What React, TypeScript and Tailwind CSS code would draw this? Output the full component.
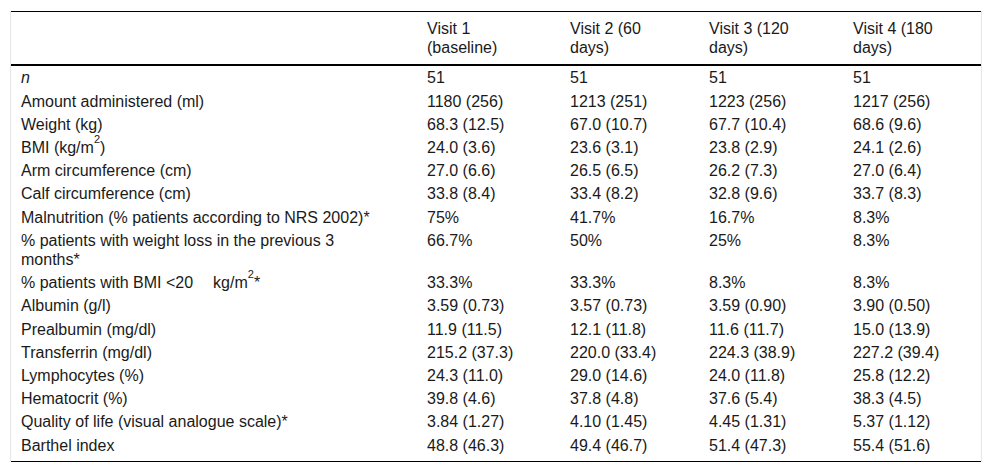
import React from "react";

type Row = { label: React.ReactNode; values: string[] };

const rows: Row[] = [
  { label: <i>n</i>, values: ["51", "51", "51", "51"] },
  { label: "Amount administered (ml)", values: ["1180 (256)", "1213 (251)", "1223 (256)", "1217 (256)"] },
  { label: "Weight (kg)", values: ["68.3 (12.5)", "67.0 (10.7)", "67.7 (10.4)", "68.6 (9.6)"] },
  {
    label: (
      <>
        BMI (kg/m<sup className="text-[11px] align-[5px] leading-none">2</sup>)
      </>
    ),
    values: ["24.0 (3.6)", "23.6 (3.1)", "23.8 (2.9)", "24.1 (2.6)"],
  },
  { label: "Arm circumference (cm)", values: ["27.0 (6.6)", "26.5 (6.5)", "26.2 (7.3)", "27.0 (6.4)"] },
  { label: "Calf circumference (cm)", values: ["33.8 (8.4)", "33.4 (8.2)", "32.8 (9.6)", "33.7 (8.3)"] },
  { label: "Malnutrition (% patients according to NRS 2002)*", values: ["75%", "41.7%", "16.7%", "8.3%"] },
  { label: "% patients with weight loss in the previous 3 months*", values: ["66.7%", "50%", "25%", "8.3%"] },
  {
    label: (
      <>
        % patients with BMI &lt;20<span className="inline-block w-[20px]" />kg/m
        <sup className="text-[11px] align-[5px] leading-none">2</sup>*
      </>
    ),
    values: ["33.3%", "33.3%", "8.3%", "8.3%"],
  },
  { label: "Albumin (g/l)", values: ["3.59 (0.73)", "3.57 (0.73)", "3.59 (0.90)", "3.90 (0.50)"] },
  { label: "Prealbumin (mg/dl)", values: ["11.9 (11.5)", "12.1 (11.8)", "11.6 (11.7)", "15.0 (13.9)"] },
  { label: "Transferrin (mg/dl)", values: ["215.2 (37.3)", "220.0 (33.4)", "224.3 (38.9)", "227.2 (39.4)"] },
  { label: "Lymphocytes (%)", values: ["24.3 (11.0)", "29.0 (14.6)", "24.0 (11.8)", "25.8 (12.2)"] },
  { label: "Hematocrit (%)", values: ["39.8 (4.6)", "37.8 (4.8)", "37.6 (5.4)", "38.3 (4.5)"] },
  { label: "Quality of life (visual analogue scale)*", values: ["3.84 (1.27)", "4.10 (1.45)", "4.45 (1.31)", "5.37 (1.12)"] },
  { label: "Barthel index", values: ["48.8 (46.3)", "49.4 (46.7)", "51.4 (47.3)", "55.4 (51.6)"] },
];

const visits = ["Visit 1 (baseline)", "Visit 2 (60 days)", "Visit 3 (120 days)", "Visit 4 (180 days)"];

export default function App() {
  return (
    <div className="w-[992px] h-[472px] bg-white px-[10px] pt-[11px] font-['Liberation_Sans',Arial,sans-serif] text-[16px] text-[#1a1a1a]">
      <div className="border-x border-[#e6e6e6]">
        <table className="w-full border-collapse table-fixed leading-[19.2px]">
          <colgroup>
            <col className="w-[406px]" />
            <col className="w-[143px]" />
            <col className="w-[139px]" />
            <col className="w-[144px]" />
            <col />
          </colgroup>
          <thead>
            {/* header row */}
            <tr className="border-t border-black border-b-2">
              <th className="pl-[10px] py-[7px]" />
              {visits.map((v) => (
                <th key={v} className="pl-[10px] pr-[30px] py-[7px] text-left font-normal align-top">
                  {v}
                </th>
              ))}
            </tr>
          </thead>
          <tbody>
            {rows.map((r, i) => {
              const last = i === rows.length - 1;
              const pad = last ? "pt-[2px] pb-[6px]" : "py-[2px]";
              return (
                <tr key={i} className={last ? "border-b border-black" : ""}>
                  <td className={`pl-[10px] pr-[40px] align-top ${pad}`}>{r.label}</td>
                  {r.values.map((v, j) => (
                    <td key={j} className={`pl-[10px] align-top ${pad}`}>
                      {v}
                    </td>
                  ))}
                </tr>
              );
            })}
          </tbody>
        </table>
      </div>
    </div>
  );
}
